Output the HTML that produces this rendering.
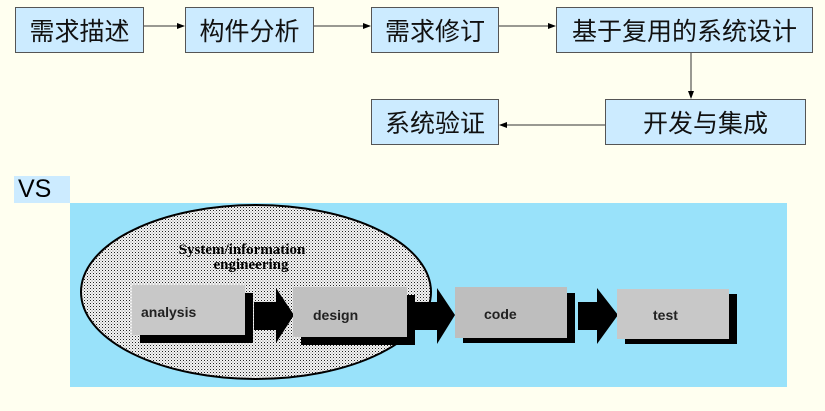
<!DOCTYPE html>
<html><head><meta charset="utf-8"><style>
body{margin:0;width:825px;height:411px;background:#FFFFF0;position:relative;overflow:hidden;font-family:"Liberation Sans","Noto Sans CJK SC",sans-serif}
.b{position:absolute;background:#CCEBFF;border:1px solid #555;box-sizing:border-box;display:flex;align-items:center;justify-content:center;font-size:25px;color:#111;height:46px}
svg{position:absolute;left:0;top:0}
</style></head><body>
<div class="b" style="left:15px;top:7px;width:129px">需求描述</div>
<div class="b" style="left:185px;top:7px;width:129px">构件分析</div>
<div class="b" style="left:371px;top:7px;width:128px">需求修订</div>
<div class="b" style="left:556px;top:7px;width:257px">基于复用的系统设计</div>
<div class="b" style="left:371px;top:99px;width:128px">系统验证</div>
<div class="b" style="left:605px;top:99px;width:201px">开发与集成</div>
<div style="position:absolute;left:14px;top:176px;width:56px;height:27px;background:#CCEBFF;font-size:25px;line-height:27px;padding-left:4px;box-sizing:border-box">VS</div>
<div style="position:absolute;left:70px;top:203px;width:717px;height:184px;background:#99E2FA"></div>
<svg width="825" height="411">
<defs>
<pattern id="d" width="3" height="3" patternUnits="userSpaceOnUse"><rect width="3" height="3" fill="#f4f4f4"/><rect width="1" height="1" fill="#222"/><rect x="1.5" y="1.5" width="1" height="1" fill="#888"/></pattern>
<marker id="m" markerWidth="8" markerHeight="8" refX="7" refY="4" orient="auto" markerUnits="userSpaceOnUse"><path d="M0,1L8,4L0,7z" fill="#000"/></marker>
</defs>
<g stroke="#333" stroke-width="1" marker-end="url(#m)">
<line x1="144" y1="26" x2="184" y2="26"/>
<line x1="314" y1="26" x2="370" y2="26"/>
<line x1="499" y1="26" x2="555" y2="26"/>
<line x1="691" y1="53" x2="691" y2="98"/>
<line x1="605" y1="125" x2="500" y2="125"/>
</g>
<ellipse cx="256" cy="292" rx="175" ry="87" fill="url(#d)" stroke="#000" stroke-width="2"/>
<text x="242" y="254" font-family="Liberation Serif" font-weight="bold" font-size="15" text-anchor="middle">System/information</text>
<text x="251" y="269" font-family="Liberation Serif" font-weight="bold" font-size="15" text-anchor="middle">engineering</text>
<g fill="#000">
<rect x="140" y="293" width="113" height="50"/>
<rect x="301" y="295" width="114" height="50"/>
<rect x="463" y="293" width="112" height="50"/>
<rect x="625" y="294" width="112" height="50"/>
<path d="M254,302H276V288L294,315L276,343V330H254z"/>
<path d="M415,302H437V288L455,315L437,344V330H415z"/>
<path d="M578,302H597V288L618,315L597,344V330H578z"/>
</g>
<rect x="132" y="285" width="113" height="50" fill="#C8C8C8"/>
<rect x="293" y="287" width="114" height="50" fill="#C0C0C0"/>
<rect x="455" y="287" width="112" height="51" fill="#BEBEBE"/>
<rect x="617" y="289" width="112" height="50" fill="#C8C8C8"/>
<g font-family="Liberation Sans" font-weight="bold" font-size="14" fill="#222">
<text x="141" y="317">analysis</text>
<text x="313" y="320">design</text>
<text x="484" y="319">code</text>
<text x="653" y="320">test</text>
</g>
</svg>
</body></html>
